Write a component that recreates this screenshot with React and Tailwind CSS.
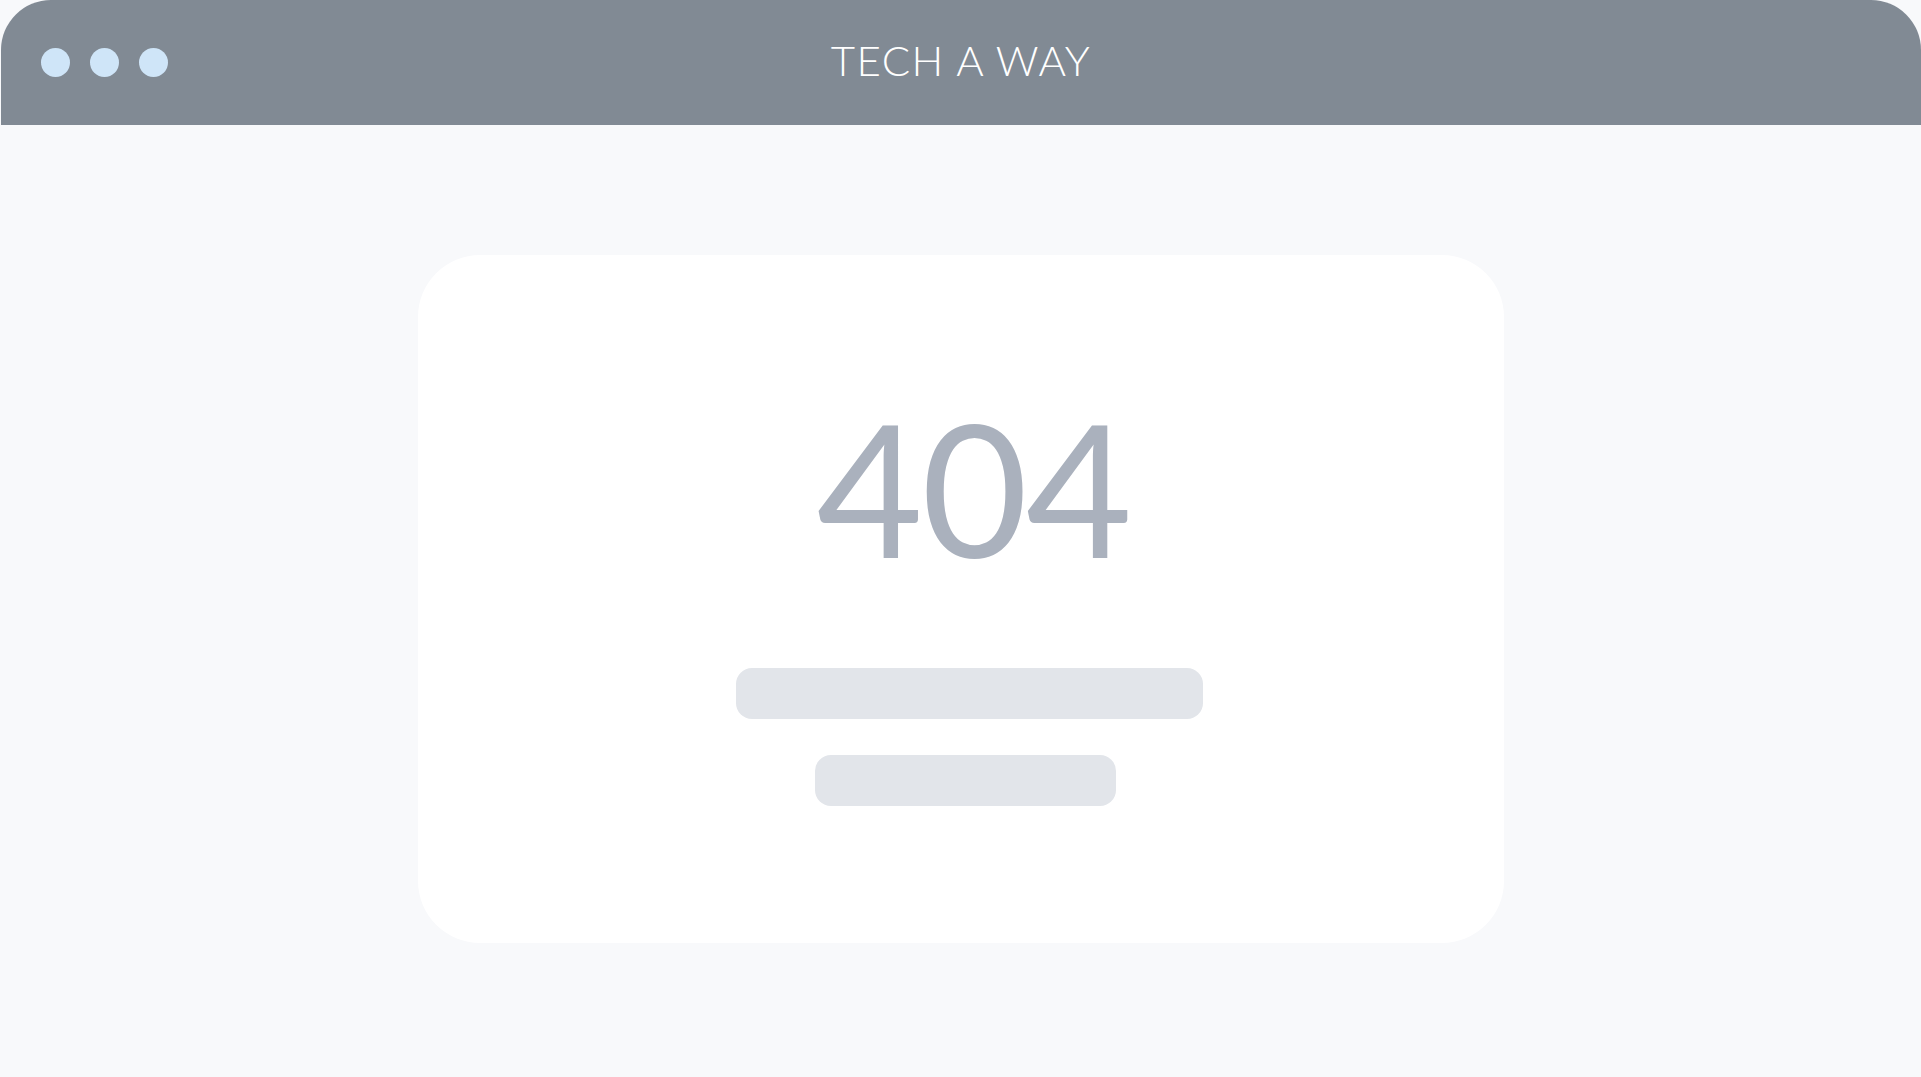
export default function App() {
  return (
    <div className="min-h-[1077px] w-full bg-[#f8f9fb] flex flex-col" style={{ fontFamily: 'Lato, "Open Sans", sans-serif' }}>
      <header className="ml-px h-[125px] rounded-t-[50px] bg-[#818a94] relative flex items-center justify-center">
        <div className="absolute left-[40px] top-[48px] flex gap-[20px]">
          <span className="block w-[29px] h-[29px] rounded-full bg-[#cfe5f8]" />
          <span className="block w-[29px] h-[29px] rounded-full bg-[#cfe5f8]" />
          <span className="block w-[29px] h-[29px] rounded-full bg-[#cfe5f8]" />
        </div>
        <h1 className="text-white text-[42px] font-light tracking-[1.5px] leading-none mb-[6px]">TECH A WAY</h1>
      </header>
      <main className="flex justify-center pt-[130px]">
        <div className="w-[1086px] h-[688px] bg-white rounded-[62px] flex flex-col items-center">
          <div className="mt-[140px] ml-[26px] text-[184px] leading-none text-[#aab1bd] font-normal tracking-[-2px]">404</div>
          <div className="mt-[89px] ml-[17px] w-[467px] h-[51px] rounded-[16px] bg-[#e2e5ea]" />
          <div className="mt-[36px] ml-[10px] w-[301px] h-[51px] rounded-[16px] bg-[#e2e5ea]" />
        </div>
      </main>
    </div>
  );
}
